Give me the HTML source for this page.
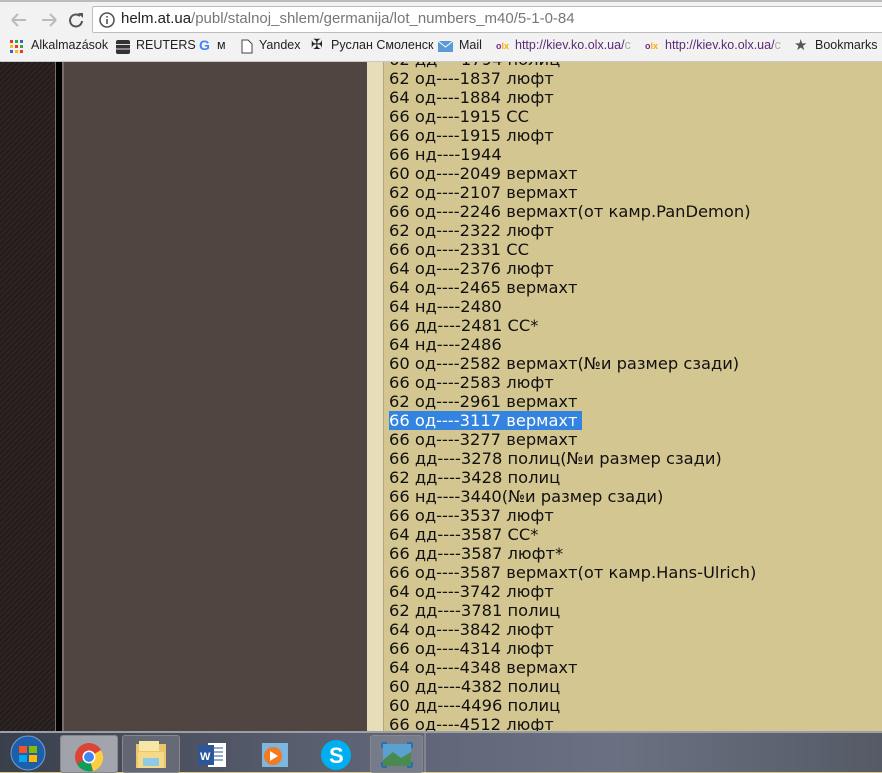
<!DOCTYPE html>
<html><head><meta charset="utf-8"><style>
*{margin:0;padding:0;box-sizing:border-box}
body{width:882px;height:772px;overflow:hidden;position:relative;background:#d4c690;font-family:"Liberation Sans",sans-serif}
.top{position:absolute;left:0;top:0;width:882px;height:62px;background:#f2f2f2;border-bottom:1px solid #c8c8c8}
.top .line{position:absolute;top:0;left:0;width:882px;height:2px;background:#bcbcbc}
.addr{position:absolute;left:92px;top:6px;width:800px;height:27px;background:#fff;border:1px solid #bdbdbd;border-radius:2px}
.url{position:absolute;left:121px;top:10px;font-size:15px;color:#777}
.url b{font-weight:normal;color:#222}
.bm{position:absolute;top:38px;font-size:12.5px;color:#222;white-space:nowrap}
.left1{position:absolute;left:0;top:62px;width:55px;height:670px;background:repeating-linear-gradient(135deg,#231c1b 0 2px,#2c2524 2px 4px)}
.lb{position:absolute;left:55px;top:62px;width:1px;height:670px;background:#7a6f68}
.blk{position:absolute;left:56px;top:62px;width:6px;height:670px;background:#000}
.lb2{position:absolute;left:62px;top:62px;width:2px;height:670px;background:#7a6f68}
.brown{position:absolute;left:64px;top:62px;width:303px;height:670px;background:#514541}
.strip{position:absolute;left:367px;top:62px;width:16px;height:670px;background:#e7ddb8}
.bd{position:absolute;left:383px;top:62px;width:1px;height:670px;background:#b3a67a}
.txt{position:absolute;left:389px;top:50px;font-family:"DejaVu Sans",sans-serif;font-size:16.3px;line-height:19px;color:#111;white-space:pre}
.hl{background:#3384e0;color:#fff;display:inline-block;padding-right:4px;margin-left:-3px;padding-left:3px}
.task{position:absolute;left:0;top:731px;width:882px;height:41px;background:linear-gradient(90deg,#3a3f4c,#5d6374 40%,#6b7182 70%,#555a66);border-top:2px solid #9a9ea6}
.tb{position:absolute;top:2px;height:38px;width:58px;border:1px solid #888;border-radius:3px;background:rgba(255,255,255,.15)}
</style></head><body>
<div class="top"><div class="line"></div>
<svg style="position:absolute;left:8px;top:10px" width="80" height="20"><path d="M4 10h14M4 10l6-6M4 10l6 6" stroke="#bbb" stroke-width="2" fill="none"/><path d="M48 10H34M48 10l-6-6M48 10l-6 6" stroke="#bbb" stroke-width="2" fill="none"/><path d="M72 6a6 6 0 1 0 2 5" stroke="#555" stroke-width="2" fill="none"/><path d="M70 3h5v5z" fill="#555"/></svg>
<div class="addr"></div>
<svg style="position:absolute;left:99px;top:12px" width="16" height="16"><circle cx="8" cy="8" r="7" stroke="#555" stroke-width="1.6" fill="none"/><rect x="7.2" y="7" width="1.6" height="5" fill="#555"/><rect x="7.2" y="4" width="1.6" height="1.6" fill="#555"/></svg>
<div class="url"><b>helm.at.ua</b>/publ/stalnoj_shlem/germanija/lot_numbers_m40/5-1-0-84</div>
<svg style="position:absolute;left:10px;top:40px" width="14" height="14"><g><rect x="0" y="0" width="3" height="3" fill="#e33"/><rect x="5" y="0" width="3" height="3" fill="#3a3"/><rect x="10" y="0" width="3" height="3" fill="#36c"/><rect x="0" y="5" width="3" height="3" fill="#fb0"/><rect x="5" y="5" width="3" height="3" fill="#e33"/><rect x="10" y="5" width="3" height="3" fill="#3a3"/><rect x="0" y="10" width="3" height="3" fill="#36c"/><rect x="5" y="10" width="3" height="3" fill="#fb0"/><rect x="10" y="10" width="3" height="3" fill="#e33"/></g></svg>
<div class="bm" style="left:31px">Alkalmazások</div>
<svg style="position:absolute;left:116px;top:40px" width="14" height="14"><rect width="14" height="14" rx="2" fill="#333"/><path d="M0 4.5h14M0 9h14" stroke="#ddd"/></svg>
<div class="bm" style="left:136px">REUTERS</div>
<div class="bm" style="left:199px;font-weight:bold;color:#4285f4;font-size:14px;top:37px">G</div>
<div class="bm" style="left:217px">м</div>
<svg style="position:absolute;left:241px;top:39px" width="12" height="15"><path d="M1 1h6l4 4v9H1z" fill="#fff" stroke="#444"/></svg>
<div class="bm" style="left:259px">Yandex</div>
<div class="bm" style="left:311px;font-size:14px;top:36px">✠</div>
<div class="bm" style="left:331px">Руслан Смоленск</div>
<svg style="position:absolute;left:438px;top:41px" width="15" height="11"><rect width="15" height="11" fill="#5b9bd5"/><path d="M0 0l7.5 6L15 0" stroke="#fff" fill="none"/></svg>
<div class="bm" style="left:459px">Mail</div>
<div class="bm" style="left:496px;font-size:9px;top:41px;color:#7a2d8c;font-weight:bold">o<span style="color:#fa0">lx</span></div>
<div class="bm" style="left:515px;color:#5a2b74">http://kiev.ko.olx.ua/<span style="color:#aaa">c</span></div>
<div class="bm" style="left:645px;font-size:9px;top:41px;color:#7a2d8c;font-weight:bold">o<span style="color:#fa0">lx</span></div>
<div class="bm" style="left:665px;color:#5a2b74">http://kiev.ko.olx.ua/<span style="color:#aaa">c</span></div>
<div class="bm" style="left:794px;font-size:15px;top:36px;color:#555">★</div>
<div class="bm" style="left:815px">Bookmarks</div>
</div>
<div class="left1"></div><div class="lb"></div><div class="blk"></div><div class="lb2"></div><div class="brown"></div><div class="strip"></div><div class="bd"></div>
<div class="txt" style="clip-path:inset(12px 0 0 0)">62 дд----1794 полиц
62 од----1837 люфт
64 од----1884 люфт
66 од----1915 СС
66 од----1915 люфт
66 нд----1944
60 од----2049 вермахт
62 од----2107 вермахт
66 од----2246 вермахт(от камр.PanDemon)
62 од----2322 люфт
66 од----2331 СС
64 од----2376 люфт
64 од----2465 вермахт
64 нд----2480
66 дд----2481 СС*
64 нд----2486
60 од----2582 вермахт(№и размер сзади)
66 од----2583 люфт
62 од----2961 вермахт
<span class="hl">66 од----3117 вермахт</span>
66 од----3277 вермахт
66 дд----3278 полиц(№и размер сзади)
62 дд----3428 полиц
66 нд----3440(№и размер сзади)
66 од----3537 люфт
64 дд----3587 СС*
66 дд----3587 люфт*
66 од----3587 вермахт(от камр.Hans-Ulrich)
64 од----3742 люфт
62 дд----3781 полиц
64 од----3842 люфт
66 од----4314 люфт
64 од----4348 вермахт
60 дд----4382 полиц
60 дд----4496 полиц
66 од----4512 люфт</div>
<div class="task">
<svg style="position:absolute;left:8px;top:1px" width="40" height="38"><circle cx="20" cy="19" r="17" fill="#1d5fa8" stroke="#6fa0d8"/><path d="M11 12h8v7h-8z" fill="#f35325"/><path d="M21 12h8v7h-8z" fill="#81bc06"/><path d="M11 21h8v7h-8z" fill="#05a6f0"/><path d="M21 21h8v7h-8z" fill="#ffba08"/></svg>
<div class="tb" style="left:60px;background:rgba(255,255,255,.5)"></div>
<svg style="position:absolute;left:73px;top:8px" width="32" height="32"><circle cx="16" cy="16" r="14" fill="#db4437"/><path d="M16 16L4 23A14 14 0 0 0 20 30z" fill="#0f9d58"/><path d="M16 16L28 9A14 14 0 0 1 20 30z" fill="#ffcd40"/><circle cx="16" cy="16" r="6.5" fill="#fff"/><circle cx="16" cy="16" r="5" fill="#4285f4"/></svg>
<div class="tb" style="left:122px"></div>
<svg style="position:absolute;left:135px;top:7px" width="32" height="30"><rect x="1" y="4" width="30" height="24" fill="#e8c86a"/><rect x="4" y="1" width="20" height="10" fill="#f6e7a8"/><rect x="3" y="12" width="26" height="16" fill="#f5d987"/><rect x="8" y="18" width="16" height="8" fill="#8ccbe8"/></svg>
<svg style="position:absolute;left:198px;top:8px" width="30" height="28"><rect x="10" y="2" width="18" height="24" fill="#fff"/><path d="M13 7h12M13 11h12M13 15h12M13 19h12" stroke="#2b579a"/><rect x="0" y="4" width="16" height="20" fill="#2b579a"/><text x="2" y="19" font-size="11" font-weight="bold" fill="#fff" font-family="Liberation Sans">W</text></svg>
<svg style="position:absolute;left:260px;top:8px" width="30" height="28"><rect x="2" y="2" width="26" height="24" fill="#7db7de"/><circle cx="13" cy="15" r="9" fill="#f5791e"/><path d="M10 10l8 5-8 5z" fill="#fff"/></svg>
<svg style="position:absolute;left:320px;top:6px" width="32" height="32"><circle cx="16" cy="16" r="15" fill="#00aff0"/><text x="9" y="24" font-size="22" font-weight="bold" fill="#fff" font-family="Liberation Sans">S</text></svg>
<div class="tb" style="left:370px;width:53px"></div>
<svg style="position:absolute;left:381px;top:9px" width="32" height="26"><rect x="2" y="2" width="28" height="22" fill="#5aa0d0"/><path d="M2 18l10-8 8 6 10-6v14H2z" fill="#4a8a50"/><path d="M1 1h5M1 1v5M31 1h-5M31 1v5M1 25h5M1 25v-5M31 25h-5M31 25v-5" stroke="#2b6fb0" stroke-width="2"/></svg>
<div style="position:absolute;left:424px;top:0;width:2px;height:40px;background:rgba(255,255,255,.2)"></div>
</div>
</body></html>
